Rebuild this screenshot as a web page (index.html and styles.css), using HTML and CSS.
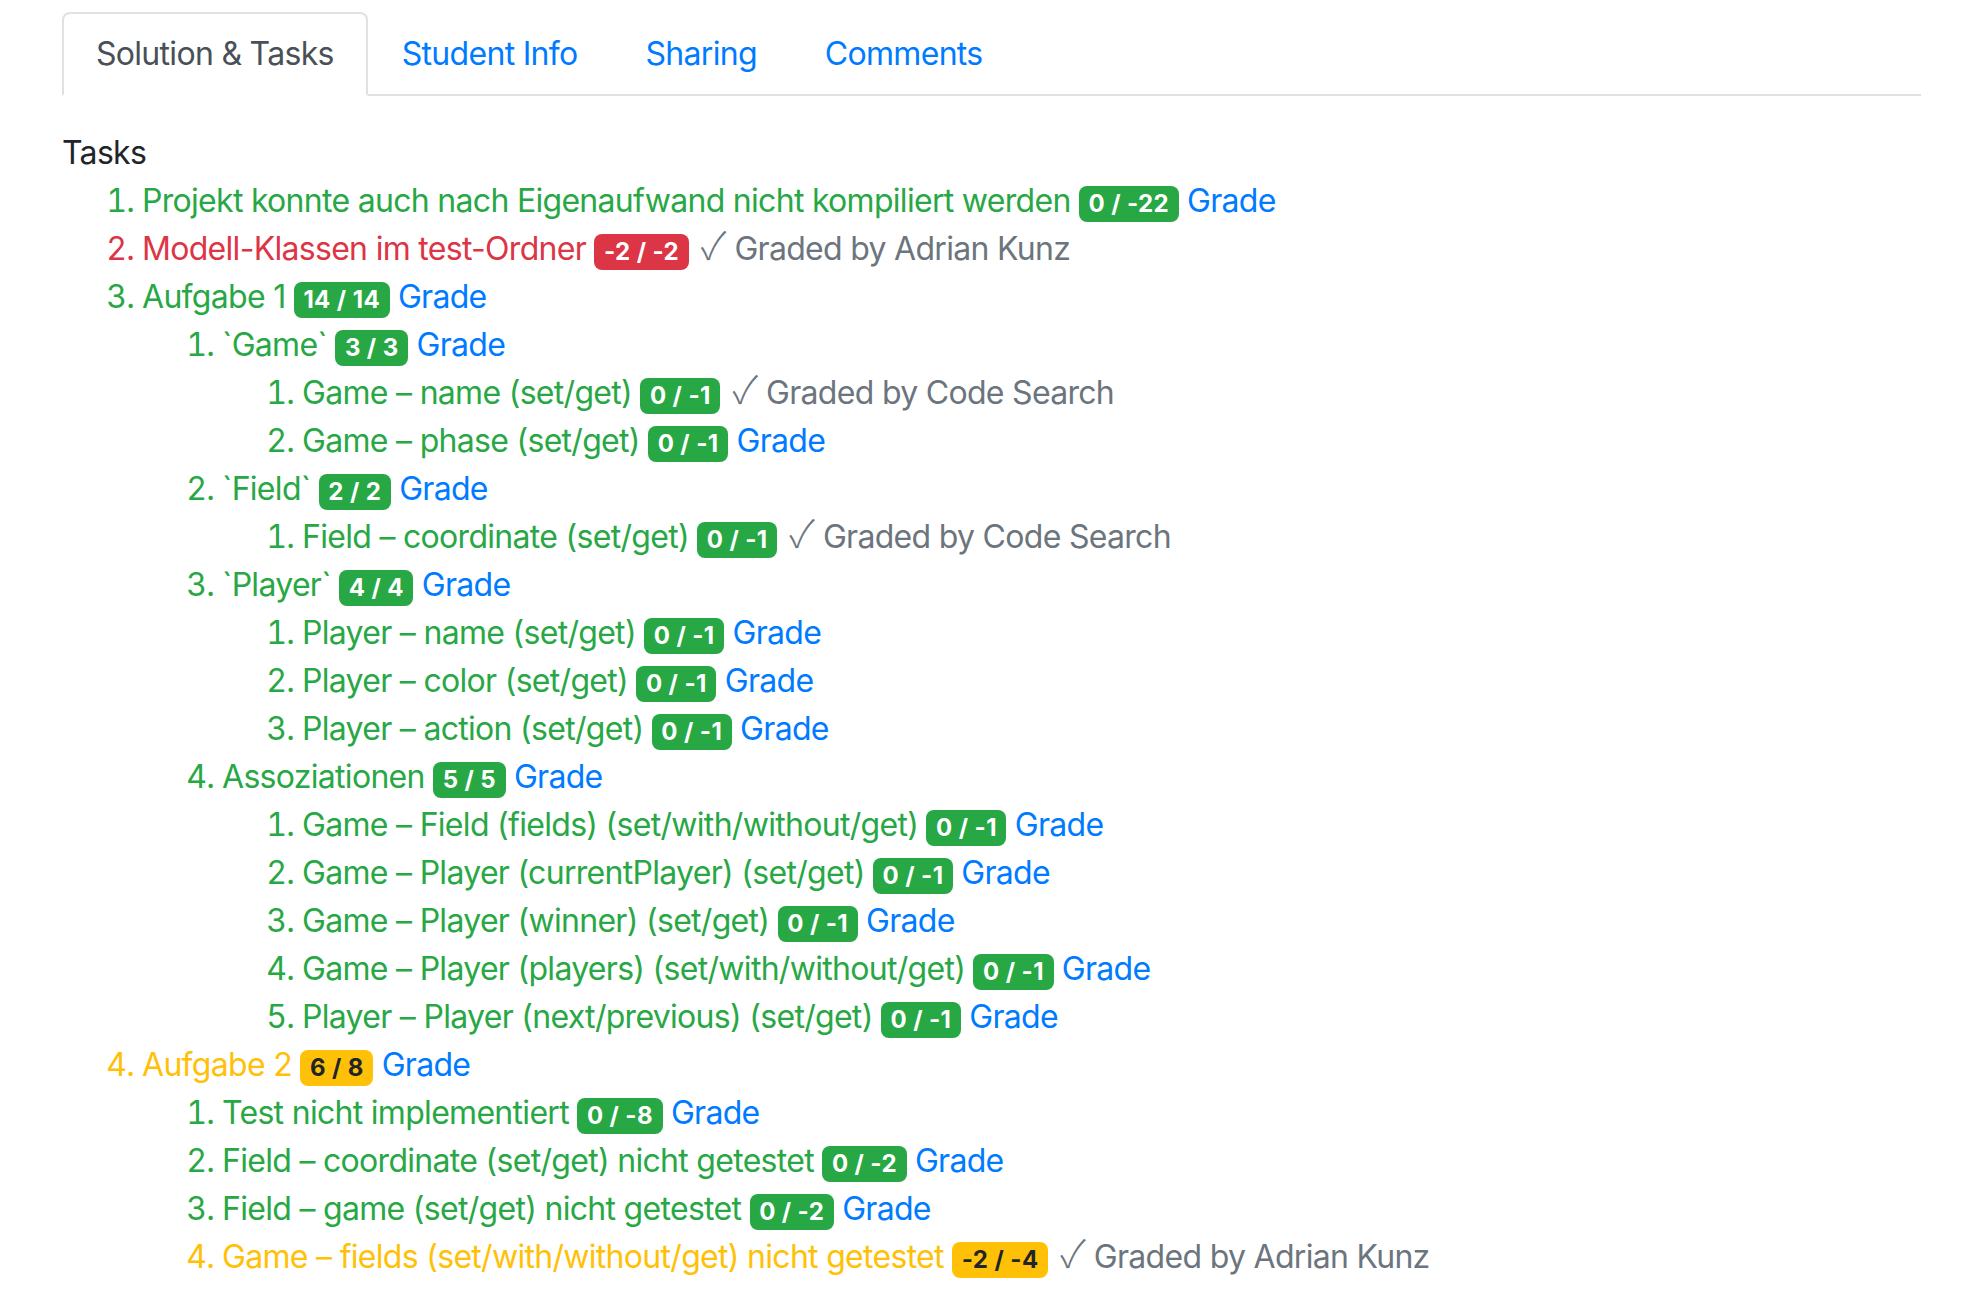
FILE: index.html
```html
<!DOCTYPE html>
<html lang="de">
<head>
<meta charset="utf-8">
<title>Solution &amp; Tasks</title>
<link rel="stylesheet" href="styles.css">
</head>
<body>
<div class="page">
  <ul class="nav-tabs">
    <li class="nav-item"><a class="nav-link active">Solution &amp; Tasks</a></li>
    <li class="nav-item"><a class="nav-link">Student Info</a></li>
    <li class="nav-item"><a class="nav-link">Sharing</a></li>
    <li class="nav-item"><a class="nav-link">Comments</a></li>
  </ul>
  <div class="tab-content">
    <div class="tasks-title">Tasks</div>
    <ol class="tasks">
      <li class="text-success">Projekt konnte auch nach Eigenaufwand nicht kompiliert werden <span class="badge badge-success">0 / -22</span> <a class="grade">Grade</a></li>
      <li class="text-danger">Modell-Klassen im test-Ordner <span class="badge badge-danger">-2 / -2</span> <span class="muted"><span class="check">✓</span> Graded by Adrian Kunz</span></li>
      <li class="text-success">Aufgabe 1 <span class="badge badge-success">14 / 14</span> <a class="grade">Grade</a>
        <ol>
          <li class="text-success">`Game` <span class="badge badge-success">3 / 3</span> <a class="grade">Grade</a>
            <ol>
              <li class="text-success">Game – name (set/get) <span class="badge badge-success">0 / -1</span> <span class="muted"><span class="check">✓</span> Graded by Code Search</span></li>
              <li class="text-success">Game – phase (set/get) <span class="badge badge-success">0 / -1</span> <a class="grade">Grade</a></li>
            </ol>
          </li>
          <li class="text-success">`Field` <span class="badge badge-success">2 / 2</span> <a class="grade">Grade</a>
            <ol>
              <li class="text-success">Field – coordinate (set/get) <span class="badge badge-success">0 / -1</span> <span class="muted"><span class="check">✓</span> Graded by Code Search</span></li>
            </ol>
          </li>
          <li class="text-success">`Player` <span class="badge badge-success">4 / 4</span> <a class="grade">Grade</a>
            <ol>
              <li class="text-success">Player – name (set/get) <span class="badge badge-success">0 / -1</span> <a class="grade">Grade</a></li>
              <li class="text-success">Player – color (set/get) <span class="badge badge-success">0 / -1</span> <a class="grade">Grade</a></li>
              <li class="text-success">Player – action (set/get) <span class="badge badge-success">0 / -1</span> <a class="grade">Grade</a></li>
            </ol>
          </li>
          <li class="text-success">Assoziationen <span class="badge badge-success">5 / 5</span> <a class="grade">Grade</a>
            <ol>
              <li class="text-success">Game – Field (fields) (set/with/without/get) <span class="badge badge-success">0 / -1</span> <a class="grade">Grade</a></li>
              <li class="text-success">Game – Player (currentPlayer) (set/get) <span class="badge badge-success">0 / -1</span> <a class="grade">Grade</a></li>
              <li class="text-success">Game – Player (winner) (set/get) <span class="badge badge-success">0 / -1</span> <a class="grade">Grade</a></li>
              <li class="text-success">Game – Player (players) (set/with/without/get) <span class="badge badge-success">0 / -1</span> <a class="grade">Grade</a></li>
              <li class="text-success">Player – Player (next/previous) (set/get) <span class="badge badge-success">0 / -1</span> <a class="grade">Grade</a></li>
            </ol>
          </li>
        </ol>
      </li>
      <li class="text-warning">Aufgabe 2 <span class="badge badge-warning">6 / 8</span> <a class="grade">Grade</a>
        <ol>
          <li class="text-success">Test nicht implementiert <span class="badge badge-success">0 / -8</span> <a class="grade">Grade</a></li>
          <li class="text-success">Field – coordinate (set/get) nicht getestet <span class="badge badge-success">0 / -2</span> <a class="grade">Grade</a></li>
          <li class="text-success">Field – game (set/get) nicht getestet <span class="badge badge-success">0 / -2</span> <a class="grade">Grade</a></li>
          <li class="text-warning">Game – fields (set/with/without/get) nicht getestet <span class="badge badge-warning">-2 / -4</span> <span class="muted"><span class="check">✓</span> Graded by Adrian Kunz</span></li>
        </ol>
      </li>
    </ol>
  </div>
</div>
</body>
</html>
```

FILE: styles.css
```css
* { box-sizing: border-box; }

html, body {
  margin: 0;
  padding: 0;
  background: #fff;
}

body {
  font-family: Inter, "Noto Sans", "Liberation Sans", sans-serif;
  font-size: 32px;
  line-height: 48px;
  letter-spacing: -0.7px;
  color: #212529;
}

.page {
  padding: 12px 62px 0 62px;
}

.nav-tabs {
  display: flex;
  list-style: none;
  margin: 0;
  padding: 0;
  border-bottom: 2px solid #dee2e6;
}

.nav-item {
  margin-bottom: -2px;
}

.nav-link {
  display: block;
  padding: 16px 32px;
  border: 2px solid transparent;
  border-top-left-radius: 8px;
  border-top-right-radius: 8px;
  color: #007bff;
  text-decoration: none;
}

.nav-link.active {
  color: #495057;
  background: #fff;
  border-color: #dee2e6 #dee2e6 #fff;
}

.tab-content {
  padding-top: 33px;
}

.tasks-title {
  color: #212529;
}

.tasks,
.tasks ol {
  margin: 0;
  padding-left: 80px;
}

.text-success { color: #28a745; }
.text-danger { color: #dc3545; }
.text-warning { color: #ffc107; }

.badge {
  display: inline-block;
  padding: 6px 9.6px;
  font-size: 24px;
  font-weight: 700;
  line-height: 1;
  letter-spacing: 0.4px;
  text-align: center;
  white-space: nowrap;
  vertical-align: baseline;
  border-radius: 8px;
}

.badge-success { background: #28a745; color: #fff; }
.badge-danger { background: #dc3545; color: #fff; }
.badge-warning { background: #ffc107; color: #212529; }

.grade {
  color: #007bff;
  text-decoration: none;
}

.muted {
  color: #6c757d;
}

.check {
  padding-left: 4px;
  font-family: "Noto Sans CJK JP", "DejaVu Sans", sans-serif;
  font-weight: 300;
  font-size: 38px;
  line-height: 1;
  letter-spacing: 0;
}
```
